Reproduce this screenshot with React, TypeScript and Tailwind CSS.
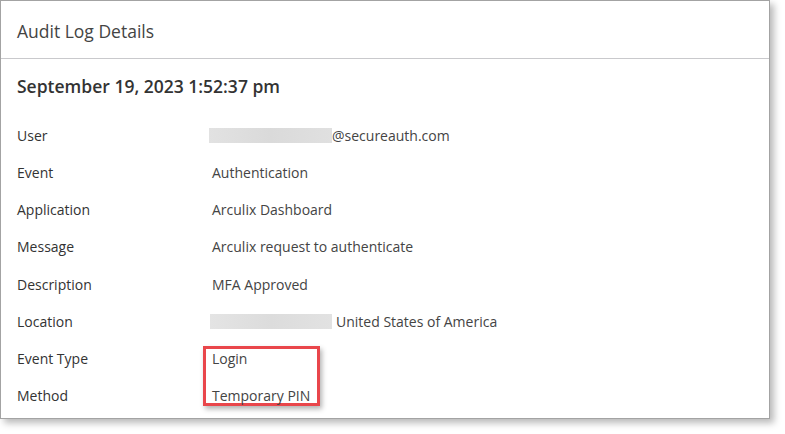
const rows: { label: string; value: React.ReactNode }[] = [
  {
    label: "User",
    value: (
      <span className="flex items-center">
        <span className="ml-[-3px] h-[15px] w-[123px] bg-gradient-to-r from-[#e2e2e2] via-[#dadada] to-[#e0e0e0]" />
        <span>@secureauth.com</span>
      </span>
    ),
  },
  { label: "Event", value: "Authentication" },
  { label: "Application", value: "Arculix Dashboard" },
  { label: "Message", value: "Arculix request to authenticate" },
  { label: "Description", value: "MFA Approved" },
  {
    label: "Location",
    value: (
      <span className="flex items-center">
        <span className="ml-[-2px] h-[15px] w-[122px] bg-gradient-to-r from-[#e4e4e4] via-[#dcdcdc] to-[#e2e2e2]" />
        <span className="ml-[4px]">United States of America</span>
      </span>
    ),
  },
  { label: "Event Type", value: "Login" },
  { label: "Method", value: "Temporary PIN" },
];

export default function App() {
  return (
    <div className="h-[434px] w-[785px] bg-white font-['Open_Sans',sans-serif]">
      <div className="flex h-[419px] w-[770px] flex-col border border-[#a3a3a3] bg-white shadow-[4px_4px_7px_rgba(0,0,0,0.28)]">
        {/* Header */}
        <div className="flex h-[58px] items-center border-b border-[#c9c9cc] pl-4 pt-[3px]">
          <h2 className="text-[17.5px] font-normal text-[#444]">Audit Log Details</h2>
        </div>

        {/* Body */}
        <div className="flex flex-col pl-4 pt-[13px]">
          <div className="h-[28px] text-[17.5px] font-semibold leading-[28px] text-[#333]">
            September 19, 2023 1:52:37 pm
          </div>
          <div className="mt-[17px] flex flex-col">
            {rows.map((row) => (
              <div key={row.label} className="flex h-[37.15px] items-center text-[14px]">
                <span className="w-[195px] text-[#333]">{row.label}</span>
                <span className="relative text-[#444]">
                  {row.value}
                  {row.label === "Event Type" && (
                    <span className="absolute left-[-9px] top-[-2px] h-[60px] w-[117px] border-[3px] border-[#e9464b] shadow-[2px_3px_5px_rgba(0,0,0,0.3)]" />
                  )}
                </span>
              </div>
            ))}
          </div>
        </div>
      </div>
    </div>
  );
}
